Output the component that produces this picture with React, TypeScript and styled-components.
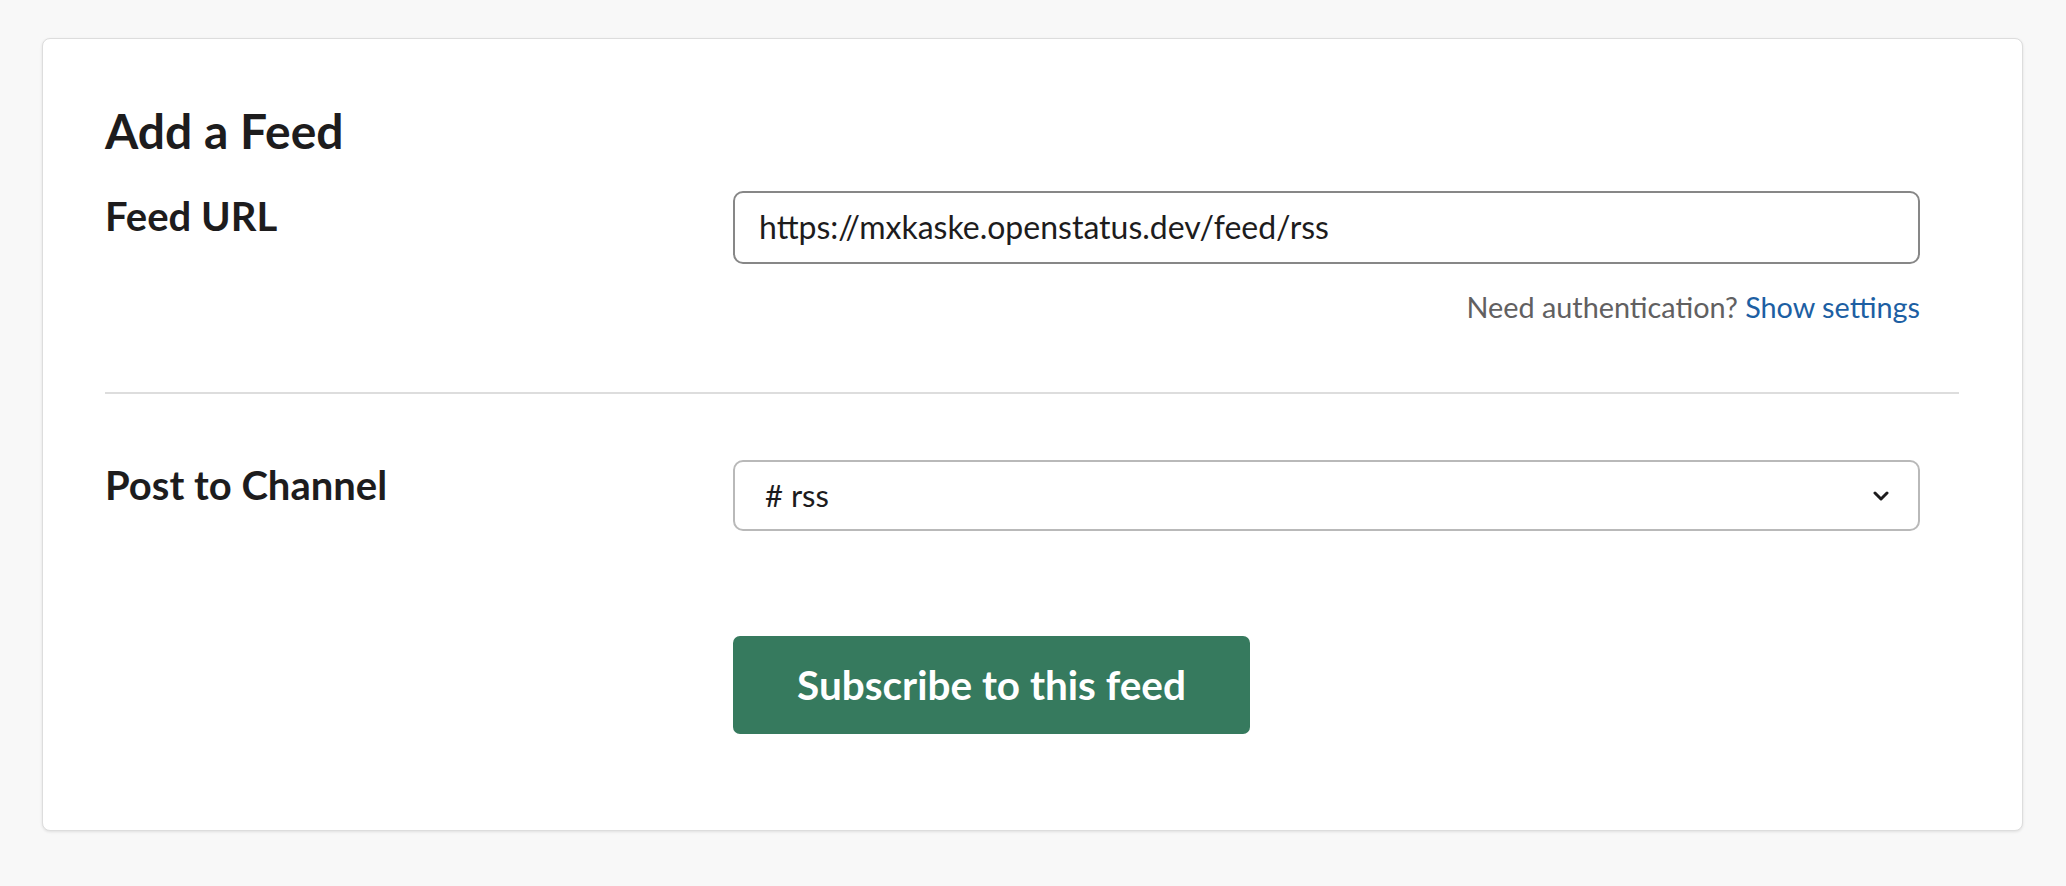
import React from "react";
import styled, { createGlobalStyle } from "styled-components";

const Global = createGlobalStyle`
  html, body { margin: 0; padding: 0; background: #f8f8f8; }
  body { font-family: Lato, "Noto Sans", sans-serif; color: #1d1c1d; }
  * { box-sizing: border-box; }
`;

const Page = styled.div`
  padding: 38px 43px 55px 42px;
`;

const Card = styled.section`
  background: #ffffff;
  border: 1px solid #dddddd;
  border-radius: 8px;
  box-shadow: 0 1px 3px rgba(0, 0, 0, 0.1);
  padding: 63px 63px 96px 62px;
`;

const Heading = styled.h1`
  margin: 0;
  font-size: 48px;
  line-height: 1.2;
  font-weight: 700;
  color: #1d1c1d;
`;

const Row = styled.div<{ $top: number }>`
  display: grid;
  grid-template-columns: 628px 1187px;
  margin-top: ${(p) => p.$top}px;
`;

const Label = styled.label`
  margin-top: 1px;
  font-size: 40px;
  line-height: 1.2;
  font-weight: 700;
  color: #1d1c1d;
`;

const Field = styled.div`
  display: flex;
  flex-direction: column;
`;

const TextInput = styled.div`
  height: 73px;
  border: 2px solid #878787;
  border-radius: 10px;
  padding: 0 24px;
  display: flex;
  align-items: center;
  font-size: 32px;
  line-height: 1.2;
  color: #1d1c1d;
`;

const Helper = styled.div`
  margin-top: 26px;
  text-align: right;
  font-size: 28.8px;
  line-height: 1.2;
  color: #616061;
`;

const Link = styled.a`
  color: #1d5fa3;
  text-decoration: none;
`;

const Divider = styled.hr`
  margin: 68px 0 0;
  border: none;
  height: 2px;
  background: #dddddd;
`;

const Select = styled.div`
  height: 71px;
  border: 2px solid #b9b9b9;
  border-radius: 10px;
  padding: 0 29px 0 30px;
  display: flex;
  align-items: center;
  justify-content: space-between;
  font-size: 31px;
  line-height: 1.2;
  color: #1d1c1d;
`;

const Button = styled.button`
  width: 517px;
  height: 98px;
  border: none;
  border-radius: 7px;
  background: #367a5e;
  color: #ffffff;
  font-family: Lato, "Noto Sans", sans-serif;
  font-size: 40.5px;
  font-weight: 700;
  line-height: 1.2;
  cursor: pointer;
`;

const Chevron = () => (
  <svg width="16" height="10" viewBox="0 0 16 10" aria-hidden="true">
    <path d="M2 2 L8 8 L14 2" fill="none" stroke="#1d1c1d" strokeWidth="3" strokeLinecap="round" strokeLinejoin="round" />
  </svg>
);

export default function App() {
  return (
    <>
      <Global />
      <Page>
        <Card>
          <Heading>Add a Feed</Heading>
          <Row $top={31}>
            <Label>Feed URL</Label>
            <Field>
              <TextInput>https://mxkaske.openstatus.dev/feed/rss</TextInput>
              <Helper>
                Need authentication? <Link href="#">Show settings</Link>
              </Helper>
            </Field>
          </Row>
          <Divider />
          <Row $top={66}>
            <Label>Post to Channel</Label>
            <Field>
              <Select>
                <span># rss</span>
                <Chevron />
              </Select>
            </Field>
          </Row>
          <Row $top={105}>
            <span />
            <Field>
              <Button>Subscribe to this feed</Button>
            </Field>
          </Row>
        </Card>
      </Page>
    </>
  );
}
